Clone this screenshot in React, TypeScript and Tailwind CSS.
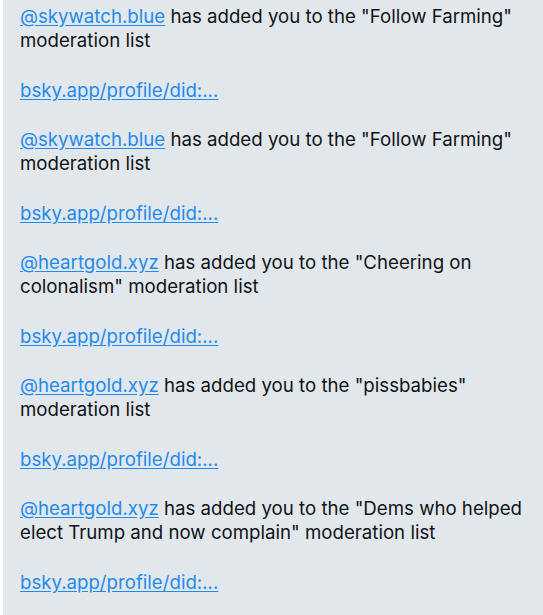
import React from "react";

interface Notice {
    handle: string;
    list: string;
}

const notices: Notice[] = [
    { handle: "@skywatch.blue", list: "Follow Farming" },
    { handle: "@skywatch.blue", list: "Follow Farming" },
    { handle: "@heartgold.xyz", list: "Cheering on colonalism" },
    { handle: "@heartgold.xyz", list: "pissbabies" },
    { handle: "@heartgold.xyz", list: "Dems who helped elect Trump and now complain" },
];

const NoticeBlock = ({ notice }: { notice: Notice }) => (
    <div className="flex flex-col mb-[25px]">
        <p className="leading-6">
            <a href="#" className="text-[#1f8bec] underline underline-offset-2">{notice.handle}</a> has added you to the "{notice.list}" moderation list
        </p>
        <p className="leading-6 mt-[26px]">
            <a href="#" className="text-[#1f8bec] underline underline-offset-2">bsky.app/profile/did:...</a>
        </p>
    </div>
);

export default function App() {
    return (
        <div className="w-[543px] h-[615px] overflow-hidden bg-white flex">
            <div
                className="ml-[3px] flex-1 bg-[#e2e7eb] pl-[17px] pr-[12px] pt-[5px] text-[18.67px] text-[#101418]"
                style={{ fontFamily: "Inter, 'Noto Sans', sans-serif" }}
            >
                {notices.map((n, i) => (
                    <NoticeBlock key={i} notice={n} />
                ))}
            </div>
        </div>
    );
}
